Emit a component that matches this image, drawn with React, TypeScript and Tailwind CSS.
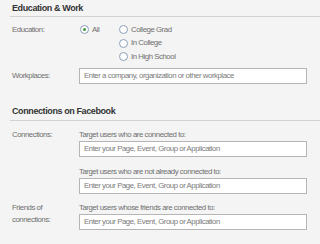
const Radio = ({ checked, label }: { checked?: boolean; label: string }) => (
  <label className="flex items-center gap-[3px] h-[13.5px]">
    <span className="w-[9px] h-[9px] rounded-full border border-[#8c9fb6] bg-white flex items-center justify-center shrink-0">
      {checked && <span className="w-[3px] h-[3px] rounded-full bg-[#3c9a3c]" />}
    </span>
    <span>{label}</span>
  </label>
);

const TextBox = ({ placeholder }: { placeholder: string }) => (
  <div className="h-[16px] w-[228px] border border-[#b5b5b5] bg-white flex items-center px-[4px] text-[#7a7a7a]">
    {placeholder}
  </div>
);

const Heading = ({ children }: { children: string }) => (
  <div className="ml-[10px] pl-[2px] border-b border-[#d3d3d3] h-[17px] flex items-center font-bold text-[9px] tracking-[-0.4px] text-[#333]">
    {children}
  </div>
);

export default function App() {
  return (
    <div className="w-[320px] h-[244px] bg-[#f4f4f4] text-[7.8px] tracking-[-0.45px] text-[#6f6f6f] overflow-hidden font-['Liberation_Sans',Arial,sans-serif] leading-none">
      <Heading>Education &amp; Work</Heading>

      {/* Education radios */}
      <div className="flex mt-[6px] pl-[12px]">
        <div className="w-[68px] h-[13.5px] flex items-center">Education:</div>
        <div className="w-[39px]">
          <Radio checked label="All" />
        </div>
        <div className="flex flex-col">
          <Radio label="College Grad" />
          <Radio label="In College" />
          <Radio label="In High School" />
        </div>
      </div>

      <div className="flex items-center mt-[4px] pl-[12px]">
        <div className="w-[67px]">Workplaces:</div>
        <TextBox placeholder="Enter a company, organization or other workplace" />
      </div>

      <div className="mt-[20px]">
        <Heading>Connections on Facebook</Heading>
      </div>

      <div className="flex pl-[12px] mt-[9px]">
        <div className="w-[67px] leading-[10px]">Connections:</div>
        <div className="flex flex-col">
          <div className="h-[10px] leading-[10px] mb-[1px]">Target users who are connected to:</div>
          <TextBox placeholder="Enter your Page, Event, Group or Application" />
          <div className="h-[10px] leading-[10px] mt-[10px] mb-[1px]">Target users who are not already connected to:</div>
          <TextBox placeholder="Enter your Page, Event, Group or Application" />
        </div>
      </div>

      <div className="flex pl-[12px] mt-[8px]">
        <div className="w-[67px] leading-[12px]">
          Friends of
          <br />
          connections:
        </div>
        <div className="flex flex-col pt-[1px]">
          <div className="h-[10px] leading-[10px] mb-[1px]">Target users whose friends are connected to:</div>
          <TextBox placeholder="Enter your Page, Event, Group or Application" />
        </div>
      </div>
    </div>
  );
}
